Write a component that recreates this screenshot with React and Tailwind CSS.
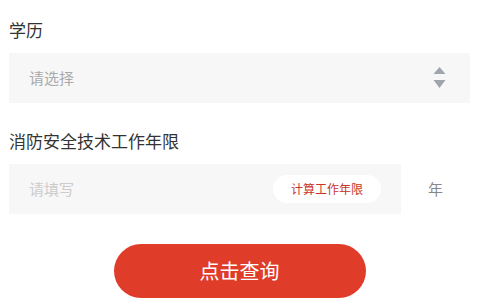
import React from "react";

const font = { fontFamily: '"Noto Sans CJK SC", "Noto Sans", sans-serif' };

function SortIcon() {
  return (
    <svg width="13" height="21" viewBox="0 0 13 21" className="mb-[1px] text-[#a0a5ab]">
      <path d="M6.5 0 L12.5 7 L0.5 7 Z" fill="currentColor" />
      <path d="M0.5 13 L12.5 13 L6.5 21 Z" fill="currentColor" />
    </svg>
  );
}

export default function App() {
  return (
    <div className="min-h-[305px] w-full bg-white px-[9px] pt-[18px]" style={font}>
      <div className="text-[17px] leading-[24px] text-[#333]">学历</div>
      <button
        type="button"
        className="mt-[11px] flex h-[50px] w-full items-center justify-between bg-[#f7f7f7] pl-5 pr-6 text-left"
      >
        <span className="text-[15px] text-[#aaa]">请选择</span>
        <SortIcon />
      </button>

      <div className="mt-[26px] text-[17px] leading-[24px] text-[#333]">消防安全技术工作年限</div>
      <div className="mt-[11px] flex items-center">
        <div className="flex h-[50px] w-[392px] items-center justify-between bg-[#f7f7f7] pl-5 pr-5">
          <span className="text-[15px] text-[#ccc]">请填写</span>
          <span className="flex h-[28px] w-[108px] items-center justify-center rounded-full bg-white text-[12px] text-[#c8352a]">
            计算工作年限
          </span>
        </div>
        <span className="ml-[27px] text-[15px] text-[#888]">年</span>
      </div>

      <div className="mt-[30px] flex justify-center">
        <button
          type="button"
          className="h-[54px] w-[252px] rounded-full bg-[#e03c2a] text-[20px] text-white"
        >
          点击查询
        </button>
      </div>
    </div>
  );
}
